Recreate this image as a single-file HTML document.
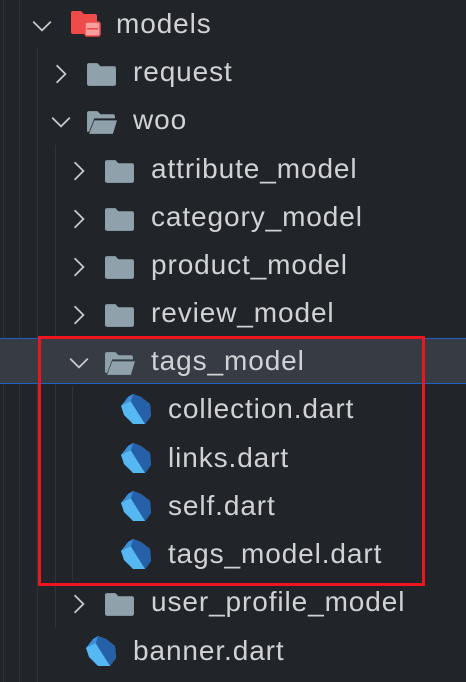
<!DOCTYPE html>
<html><head><style>
html,body{margin:0;padding:0;}
body{width:466px;height:682px;background:#212429;position:relative;overflow:hidden;font-family:"Liberation Sans",sans-serif;}
.row{position:absolute;left:0;width:466px;height:48px;}
.t{position:absolute;top:7px;font-size:28px;letter-spacing:0.9px;color:#d0d2d6;white-space:nowrap;}
.chev{position:absolute;top:14px;}
.ic{position:absolute;top:10px;}
.g{position:absolute;width:1px;background:#30343a;}
.sel{position:absolute;left:0;top:338px;width:466px;height:46px;background:#373c44;border-top:1px solid #1c63c4;border-bottom:1px solid #1c63c4;box-sizing:border-box;}
.box{position:absolute;left:38px;top:336px;width:387px;height:250px;border:3px solid #f0141e;box-sizing:border-box;}
</style></head><body>
<div class="g" style="left:3px;top:0;height:682px"></div>
<div class="g" style="left:19px;top:0;height:682px"></div>
<div class="g" style="left:37px;top:48px;height:634px"></div>
<div class="g" style="left:55px;top:145px;height:483px"></div>
<div class="g" style="left:72px;top:386px;height:195px"></div>
<div class="sel"></div>

<svg width="0" height="0" style="position:absolute">
<defs>
<symbol id="cr" viewBox="0 0 20 20"><path d="M6 2 L14 10 L6 18" fill="none" stroke="#c8cace" stroke-width="1.6"/></symbol>
<symbol id="cd" viewBox="0 0 20 20"><path d="M2 6 L10 14 L18 6" fill="none" stroke="#c8cace" stroke-width="1.6"/></symbol>
<symbol id="fc" viewBox="0 0 30 26"><path d="M1 4 Q1 2 3 2 L11 2 L14 5 L27 5 Q29 5 29 7 L29 22 Q29 24 27 24 L3 24 Q1 24 1 22 Z" fill="#8fa2ac"/></symbol>
<symbol id="fo" viewBox="0 0 30 26"><path d="M1 4 Q1 2 3 2 L11 2 L14 5 L26 5 Q28 5 28 7 L28 9 L8 9 L3 22 L1 22 Z" fill="#8fa2ac"/><path d="M8 11 L30 11 L26 24 L3 24 Z" fill="#8fa2ac"/></symbol>
<symbol id="dt" viewBox="0 0 30 30"><polygon points="12,0 20,3 29,10 30,22 24,30 12,30 3,21 0,12" fill="#56b8f2"/><polygon points="7,3 12,0 20,3 29,10 30,22 24,30" fill="#2660a8"/><polygon points="0,12 7,3 12,0 10,7" fill="#3d8fdc"/></symbol>
</defs></svg>

<div class="row" style="top:1px"><svg class="chev" style="left:31px" width="22" height="22"><use href="#cd"/></svg>
<svg class="ic" style="left:70px;top:9px" width="32" height="30" viewBox="0 0 32 30"><path d="M1 3 Q1 1 3 1 L11 1 L14 4 L25 4 Q27 4 27 6 L27 24 L3 24 Q1 24 1 22 Z" fill="#ef4b4b"/><rect x="15" y="12" width="15" height="14" rx="2" fill="#f7a0a0" stroke="#ef4b4b" stroke-width="1.5"/><rect x="17" y="18" width="11" height="1.6" fill="#ef4b4b"/></svg>
<span class="t" style="left:116px">models</span></div>

<div class="row" style="top:49px"><svg class="chev" style="left:50px" width="22" height="22"><use href="#cr"/></svg><svg class="ic" style="left:86px;top:12px" width="31" height="27"><use href="#fc"/></svg><span class="t" style="left:133px">request</span></div>
<div class="row" style="top:97px"><svg class="chev" style="left:50px" width="22" height="22"><use href="#cd"/></svg><svg class="ic" style="left:86px;top:12px" width="31" height="27"><use href="#fo"/></svg><span class="t" style="left:133px">woo</span></div>
<div class="row" style="top:146px"><svg class="chev" style="left:68px" width="22" height="22"><use href="#cr"/></svg><svg class="ic" style="left:104px;top:12px" width="31" height="27"><use href="#fc"/></svg><span class="t" style="left:151px">attribute_model</span></div>
<div class="row" style="top:194px"><svg class="chev" style="left:68px" width="22" height="22"><use href="#cr"/></svg><svg class="ic" style="left:104px;top:12px" width="31" height="27"><use href="#fc"/></svg><span class="t" style="left:151px">category_model</span></div>
<div class="row" style="top:242px"><svg class="chev" style="left:68px" width="22" height="22"><use href="#cr"/></svg><svg class="ic" style="left:104px;top:12px" width="31" height="27"><use href="#fc"/></svg><span class="t" style="left:151px">product_model</span></div>
<div class="row" style="top:290px"><svg class="chev" style="left:68px" width="22" height="22"><use href="#cr"/></svg><svg class="ic" style="left:104px;top:12px" width="31" height="27"><use href="#fc"/></svg><span class="t" style="left:151px">review_model</span></div>
<div class="row" style="top:338px"><svg class="chev" style="left:68px" width="22" height="22"><use href="#cd"/></svg><svg class="ic" style="left:104px;top:12px" width="31" height="27"><use href="#fo"/></svg><span class="t" style="left:151px">tags_model</span></div>
<div class="row" style="top:386px"><svg class="ic" style="left:121px;top:8px" width="30" height="30"><use href="#dt"/></svg><span class="t" style="left:168px">collection.dart</span></div>
<div class="row" style="top:435px"><svg class="ic" style="left:121px;top:8px" width="30" height="30"><use href="#dt"/></svg><span class="t" style="left:168px">links.dart</span></div>
<div class="row" style="top:483px"><svg class="ic" style="left:121px;top:8px" width="30" height="30"><use href="#dt"/></svg><span class="t" style="left:168px">self.dart</span></div>
<div class="row" style="top:531px"><svg class="ic" style="left:121px;top:8px" width="30" height="30"><use href="#dt"/></svg><span class="t" style="left:168px">tags_model.dart</span></div>
<div class="row" style="top:579px"><svg class="chev" style="left:68px" width="22" height="22"><use href="#cr"/></svg><svg class="ic" style="left:104px;top:12px" width="31" height="27"><use href="#fc"/></svg><span class="t" style="left:151px">user_profile_model</span></div>
<div class="row" style="top:628px"><svg class="ic" style="left:86px;top:8px" width="30" height="30"><use href="#dt"/></svg><span class="t" style="left:133px">banner.dart</span></div>

<div class="box"></div>
</body></html>
